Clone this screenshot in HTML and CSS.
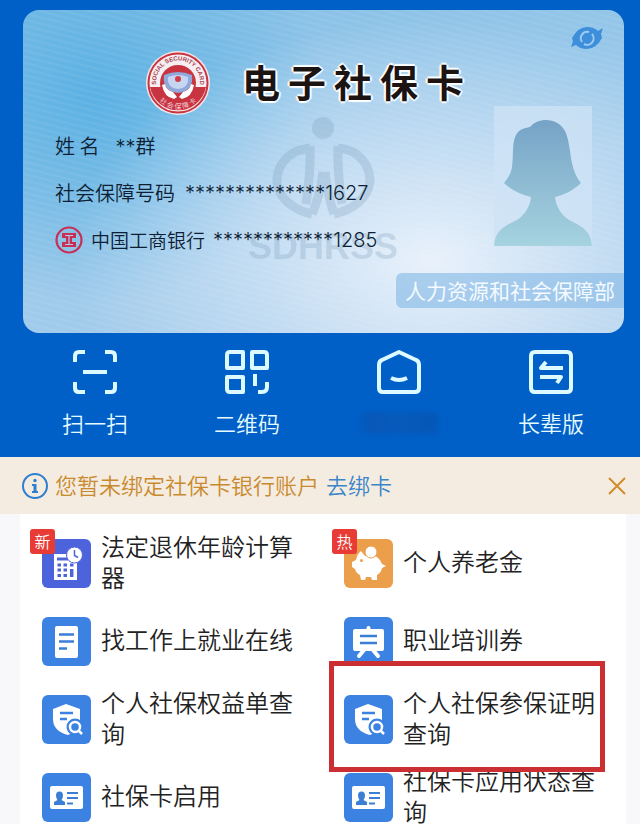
FILE: index.html
```html
<!DOCTYPE html>
<html lang="zh-CN">
<head>
  <meta charset="UTF-8">
  <meta name="viewport" content="width=device-width, initial-scale=1">
  <title>电子社保卡</title>
  <link rel="stylesheet" href="styles.css">
</head>
<body>

  <header class="top">
    <section class="card">
      <svg class="watermark" viewBox="0 0 150 150" aria-hidden="true">
        <circle cx="75" cy="14" r="11"/>
        <path class="line" d="M62 34C40 36 28 52 29 69C31 85 46 96 64 100M62 32Q63 56 58 90M75 58Q72 82 64 100"/>
        <path class="line" d="M90 34C112 36 122 52 122 67C120 85 104 96 86 100M90 32Q89 56 94 90M77 58Q80 82 86 100"/>
        <text x="75" y="145" text-anchor="middle">SDHRSS</text>
      </svg>

      <div class="card-main">
        <div class="card-left">
          <div class="card-head">
            <svg class="seal" viewBox="0 0 64 64" aria-hidden="true">
              <defs>
                <path id="arcTop" d="M11 38A22 22 0 1 1 53 38"/>
                <path id="arcBottom" d="M6 32A26 26 0 0 0 58 32"/>
              </defs>
              <circle cx="32" cy="32" r="32" fill="#f3e6ea"/>
              <circle cx="32" cy="32" r="29.500" fill="#f6eef0" stroke="#c8343f" stroke-width="2"/>
              <path d="M4 36A28.500 28.500 0 0 0 60 36Z" fill="#c8343f"/>
              <circle cx="32" cy="32" r="18" fill="#c8343f"/>
              <path d="M18 24Q32 18 46 24Q48 40 32 42Q16 40 18 24Z" fill="#8fa9da"/>
              <path d="M22 26Q32 22 42 26Q43 37 32 38Q21 37 22 26Z" fill="#c6d5f0"/>
              <path d="M16 34L19 33Q20 39 27 41L31 46L28 48Q18 46 16 34ZM48 34L45 33Q44 39 37 41L33 46L36 48Q46 46 48 34Z" fill="#fff"/>
              <circle cx="32" cy="28" r="3" fill="#d23b48"/>
              <text class="seal-en"><textPath href="#arcTop" startOffset="50%" text-anchor="middle">SOCIAL SECURITY CARD</textPath></text>
              <text class="seal-cn"><textPath href="#arcBottom" startOffset="50%" text-anchor="middle">社 会 保 障 卡</textPath></text>
            </svg>
            <h1><span>电</span><span>子</span><span>社</span><span>保</span><span>卡</span></h1>
          </div>

          <div class="info">
            <p class="name"><span>姓 名</span><span class="num">**<b>群</b></span></p>
            <p><span>社会保障号码</span><span class="num">**************1627</span></p>
            <p class="bank">
              <svg class="bank-logo" viewBox="0 0 28 28" aria-hidden="true">
                <circle cx="14" cy="14" r="12.500" fill="none" stroke="#c82f56" stroke-width="2.200"/>
                <path d="M7 7H21V12H17V16H21V21H7V16H11V12H7Z" fill="#c82f56"/>
                <path d="M14 9V19M10 9.500H18M10 18.500H18" stroke="#a9cfea" stroke-width="1.200"/>
              </svg>
              <span>中国工商银行</span><span class="num">************1285</span>
            </p>
          </div>
        </div>

        <div class="card-right">
          <button class="eye" type="button" aria-label="显示或隐藏">
            <svg viewBox="0 0 34 24">
              <path d="M2 12Q8 1 17 1Q24 1 28 5L33 2L31 8L32 12Q26 23 17 23Q10 23 6 19L1 21L3 15Z" fill="#3d8fdc"/>
              <path d="M12 16A6.500 6.500 0 0 1 19 6M22 8A6.500 6.500 0 0 1 14 18" fill="none" stroke="#9fcbee" stroke-width="2"/>
            </svg>
          </button>
          <svg class="avatar" viewBox="0 0 98 140" aria-hidden="true">
            <defs>
              <linearGradient id="person" x1="0" y1="0" x2="0" y2="1">
                <stop offset="0" stop-color="#76a3c6"/>
                <stop offset="1" stop-color="#a6d3df"/>
              </linearGradient>
            </defs>
            <path d="M0 0H98V140H0Z" fill="#cfe3f6" opacity=".75"/>
            <path d="M36 21C44 11 64 11 71 25C76 35 76 52 79 61C81 68 83 72 87 77C80 84 70 89 61 91C62 101 68 111 79 116C91 122 97 127 98 140H0C1 127 7 122 19 116C30 111 36 101 37 91C27 89 17 84 10 77C14 72 17 68 18 61C20 48 17 34 24 26C28 22 32 22 36 21Z" fill="url(#person)"/>
          </svg>
        </div>
      </div>

      <div class="issuer">人力资源和社会保障部</div>
    </section>

    <nav class="actions">
      <a href="#">
        <svg viewBox="0 0 44 44">
          <path d="M2 12V6Q2 2 6 2H12M32 2H38Q42 2 42 6V12M42 32V38Q42 42 38 42H32M12 42H6Q2 42 2 38V32M10 22H34"/>
        </svg>
        <span>扫一扫</span>
      </a>
      <a href="#">
        <svg viewBox="0 0 44 44">
          <path d="M5 2H18V18H2V5Q2 2 5 2ZM27 2H39Q42 2 42 5V18H27ZM2 27H18V42H5Q2 42 2 39ZM30 24V36M42 32V37Q42 42 37 42H33"/>
        </svg>
        <span>二维码</span>
      </a>
      <a href="#" aria-label="首页">
        <svg viewBox="0 0 44 44">
          <path d="M22 2L39 10Q42 11 42 15V38Q42 42 38 42H6Q2 42 2 38V15Q2 11 5 10ZM14 28Q22 32 30 28"/>
        </svg>
        <span class="faded"></span>
      </a>
      <a href="#">
        <svg viewBox="0 0 44 44">
          <path d="M6 2H38Q42 2 42 6V38Q42 42 38 42H6Q2 42 2 38V6Q2 2 6 2ZM34 18H12L17 12M11 27H32L28 33"/>
        </svg>
        <span>长辈版</span>
      </a>
    </nav>
  </header>

  <div class="notice">
    <svg class="info-icon" viewBox="0 0 26 26" aria-hidden="true">
      <circle cx="13" cy="13" r="12" fill="none" stroke="#2f7fd0" stroke-width="2"/>
      <circle cx="13" cy="7.500" r="1.700" fill="#2f7fd0"/>
      <path d="M10 11H14.500V18H16V20H10V18H11.500V13H10Z" fill="#2f7fd0"/>
    </svg>
    <span class="notice-text">您暂未绑定社保卡银行账户</span>
    <a class="notice-text" href="#">去绑卡</a>
    <button class="close" type="button" aria-label="关闭">
      <svg viewBox="0 0 18 18"><path d="M1 1L17 17M17 1L1 17" fill="none" stroke="#d08c2a" stroke-width="2"/></svg>
    </button>
  </div>

  <!-- 图标：菜单中重复使用 -->
  <svg class="sprite" aria-hidden="true">
    <symbol id="shield" viewBox="0 0 49 49">
      <path d="M24 9L38 14V28Q36 36 26 40Q11 36 11 24V14Z" fill="#fff"/>
      <path d="M18 18H31M18 24H25" stroke="#3b82e2" stroke-width="2.500"/>
      <circle cx="33" cy="32" r="8.500" fill="#3b82e2"/>
      <circle cx="33" cy="32" r="5" fill="none" stroke="#fff" stroke-width="2.500"/>
      <path d="M36.500 35.500L40 39" stroke="#fff" stroke-width="2.500"/>
    </symbol>
    <symbol id="idcard" viewBox="0 0 49 49">
      <rect x="8" y="13" width="33" height="23" rx="2" fill="#fff"/>
      <path d="M17.500 18.500Q21 18.500 21 22.500Q21 25 19.500 27L23 29V32H12V29L15.500 27Q14 25 14 22.500Q14 18.500 17.500 18.500Z" fill="#3b7fd4"/>
      <path d="M25 20H36M25 25H36M25 30.500H31" stroke="#3b7fd4" stroke-width="2"/>
    </symbol>
  </svg>

  <main class="menu">
    <a class="item" href="#">
      <span class="icon violet">
        <svg viewBox="0 0 49 49">
          <path d="M12 15H35V41H12Z" fill="#fff"/>
          <path d="M15 20H26" stroke="#4c63dc" stroke-width="3"/>
          <path d="M15.500 26H19M21.500 26H25M15.500 31H19M21.500 31H25M15.500 36.500H19M21.500 36.500H25M28 26H31.500" stroke="#4c63dc" stroke-width="3"/>
          <path d="M29.700 30V38" stroke="#4c63dc" stroke-width="3.500"/>
          <circle cx="32.500" cy="16" r="8" fill="#fff" stroke="#4c63dc"/>
          <path d="M32.500 11V16.500L36 18.500" fill="none" stroke="#4c63dc" stroke-width="1.500"/>
        </svg>
        <i class="tag">新</i>
      </span>
      <span class="text">法定退休年龄计算器</span>
    </a>
    <a class="item" href="#">
      <span class="icon orange">
        <svg viewBox="0 0 49 49">
          <path d="M17 12L21 17Q27 15 33 18Q37 21 38 25L42 27L38 29Q37 34 33 36V41H28L27 38H22L21 41H17L16 36Q12 34 11 30L8 28V23L12 21Q13 15 17 12Z" fill="#fff"/>
          <circle cx="27" cy="13" r="6" fill="#fff" stroke="#eb9f4b"/>
          <circle cx="17.500" cy="21.500" r="1.500" fill="#eb9f4b"/>
        </svg>
        <i class="tag">热</i>
      </span>
      <span class="text">个人养老金</span>
    </a>

    <a class="item" href="#">
      <span class="icon">
        <svg viewBox="0 0 49 49">
          <rect x="13" y="9" width="23" height="32" rx="2" fill="#fff"/>
          <path d="M17 17.500H32M17 24.500H32M17 31.500H25" stroke="#3b7fd4" stroke-width="2.500"/>
        </svg>
      </span>
      <span class="text">找工作上就业在线</span>
    </a>
    <a class="item" href="#">
      <span class="icon">
        <svg viewBox="0 0 49 49">
          <path d="M24.500 11V14M20 33L15 39M29 33L34 39" stroke="#fff" stroke-width="4" stroke-linecap="round"/>
          <rect x="9" y="12" width="31" height="22" rx="2" fill="#fff"/>
          <path d="M16 19H33M16 26H33" stroke="#3b7fd4" stroke-width="2.500"/>
        </svg>
      </span>
      <span class="text">职业培训券</span>
    </a>

    <a class="item" href="#">
      <span class="icon"><svg><use href="#shield"/></svg></span>
      <span class="text">个人社保权益单查询</span>
    </a>
    <a class="item marked" href="#">
      <span class="icon"><svg><use href="#shield"/></svg></span>
      <span class="text">个人社保参保证明查询</span>
    </a>

    <a class="item" href="#">
      <span class="icon"><svg><use href="#idcard"/></svg></span>
      <span class="text">社保卡启用</span>
    </a>
    <a class="item" href="#">
      <span class="icon"><svg><use href="#idcard"/></svg></span>
      <span class="text">社保卡应用状态查询</span>
    </a>
  </main>

</body>
</html>
```
FILE: styles.css
```css
* {
  box-sizing: border-box;
}
body {
  margin: 0;
  font-family: "Noto Sans CJK SC", sans-serif;
  font-weight: 350;
  color: #222;
  background: #fff;
}
h1, p {
  margin: 0;
}
a {
  text-decoration: none;
  color: inherit;
}
button {
  padding: 0;
  border: 0;
  background: none;
  cursor: pointer;
}
svg {
  display: block;
}

/* 顶部卡片 */
.top {
  background: #0060c8;
  padding: 10px 16px 18px 23px;
}
.card {
  position: relative;
  display: flex;
  flex-direction: column;
  padding: 16px 0 25px;
  border-radius: 16px;
  overflow: hidden;
  background:
    repeating-linear-gradient(14deg, rgba(255, 255, 255, 0) 0 3px, rgba(255, 255, 255, 0.06) 4px 5px, rgba(255, 255, 255, 0) 6px),
    radial-gradient(ellipse 60% 75% at 68% 78%, rgba(236, 243, 252, 0.95), rgba(212, 229, 246, 0.65) 50%, rgba(200, 225, 245, 0)),
    radial-gradient(ellipse 38% 65% at 12% 26%, #5bb1e3, rgba(91, 177, 227, 0)),
    linear-gradient(165deg, #84bfe6, #a0cbeb 60%, #a5cbea);
}
.watermark {
  position: absolute;
  left: 225px;
  top: 104px;
  width: 150px;
  height: 150px;
  overflow: visible;
  fill: #7398b4;
  opacity: 0.26;
}
.watermark .line {
  fill: none;
  stroke: #7398b4;
  stroke-width: 9;
}
.watermark text {
  font: bold 36px "Liberation Sans", sans-serif;
}
.card-main {
  position: relative;
  display: flex;
  justify-content: space-between;
}
.card-left {
  padding: 25px 0 0 32px;
}
.card-head {
  display: flex;
  align-items: center;
  gap: 32px;
  padding-left: 91px;
}
.seal {
  width: 64px;
  height: 64px;
}
.seal-en {
  font: bold 6px "Liberation Sans", sans-serif;
  fill: #a93f50;
}
.seal-cn {
  font-size: 7px;
  fill: #f6dfe2;
}
h1 {
  display: flex;
  gap: 8px;
  padding-bottom: 4px;
  font-size: 38px;
  line-height: 48px;
  font-weight: 700;
  color: #1b1413;
  text-shadow: 0 0 2px #fff, 0 0 2px #fff, 2px 0 1px #fff, -2px 0 1px #fff, 0 2px 1px #fff, 0 -2px 1px #fff;
}
.info {
  padding-top: 7px;
}
.info p {
  display: flex;
  align-items: center;
  gap: 10px;
  height: 47px;
  font-size: 20px;
  font-weight: 350;
  color: #0e1f35;
  white-space: nowrap;
}
.info .name {
  gap: 16px;
}
.num {
  font-family: Inter, "Noto Sans CJK SC", sans-serif;
  font-size: 20px;
}
.num b {
  font-weight: 350;
}
.info .bank {
  gap: 8px;
  font-size: 19px;
}
.bank-logo {
  width: 28px;
  height: 28px;
}
.card-right {
  display: flex;
  flex-direction: column;
  align-items: flex-end;
  gap: 56px;
  padding-right: 32px;
}
.eye {
  margin-right: -12px;
}
.eye svg {
  width: 34px;
  height: 24px;
}
.avatar {
  width: 98px;
  height: 140px;
}
.issuer {
  position: relative;
  align-self: flex-end;
  margin-top: 10px;
  padding: 0 9px;
  border-radius: 6px 0 0 6px;
  background: rgba(137, 187, 230, 0.65);
  color: #f4faff;
  font-size: 21px;
  line-height: 35px;
  font-weight: 400;
}

/* 快捷入口 */
.actions {
  display: grid;
  grid-template-columns: repeat(4, 1fr);
  margin: 17px -3px 0 -4px;
}
.actions a {
  display: flex;
  flex-direction: column;
  align-items: center;
  gap: 11px;
  color: #e6fbff;
  font-size: 22px;
  line-height: 34px;
}
.actions svg {
  width: 44px;
  height: 44px;
  fill: none;
  stroke: #dcfaff;
  stroke-width: 4;
  stroke-linejoin: round;
}
.faded {
  width: 86px;
  height: 22px;
  margin-top: 7px;
  background: linear-gradient(90deg, #0060c8, #0a55b2 15%, #0a58b6 50%, #0853b0 90%, #0060c8);
  opacity: 0.7;
  filter: blur(2px);
}

/* 绑卡提示 */
.notice {
  display: flex;
  align-items: center;
  padding: 0 14px 0 22px;
  height: 57px;
  background: #f5ece1;
  color: #c98a2e;
  font-size: 22px;
}
.notice-text {
  padding-bottom: 4px;
}
.notice a {
  margin-left: 7px;
  color: #3a86c8;
}
.info-icon {
  width: 26px;
  height: 26px;
  margin-right: 7px;
}
.close {
  margin-left: auto;
}
.close svg {
  width: 18px;
  height: 18px;
}

.sprite {
  position: absolute;
  width: 0;
  height: 0;
}

/* 菜单 */
.menu {
  display: grid;
  grid-template-columns: 1fr 1fr;
  grid-auto-rows: 78px;
  column-gap: 26px;
  padding: 10px 20px 0 42px;
  background: linear-gradient(90deg, #f8f8fb 20px, #fff 20px calc(100% - 14px), #f8f8fa calc(100% - 14px));
}
.item {
  position: relative;
  display: flex;
  align-items: center;
  gap: 10px;
  padding-right: 20px;
  font-size: 24px;
  line-height: 31px;
}
.text {
  padding-bottom: 5px;
}
.icon {
  position: relative;
  flex: none;
  border-radius: 6px;
  background: #3b82e2;
}
.icon svg {
  width: 49px;
  height: 49px;
}
.violet {
  background: #4c63dc;
}
.orange {
  background: #eb9f4b;
}
.tag {
  position: absolute;
  left: -12px;
  top: -10px;
  width: 25px;
  border-radius: 3px;
  background: #e93b36;
  color: #fff;
  font-size: 16px;
  line-height: 25px;
  font-style: normal;
  text-align: center;
}
.marked::after {
  content: "";
  position: absolute;
  z-index: 1;
  inset: -19px 15px -14px -15px;
  border: 5px solid #cb2f31;
}
```
